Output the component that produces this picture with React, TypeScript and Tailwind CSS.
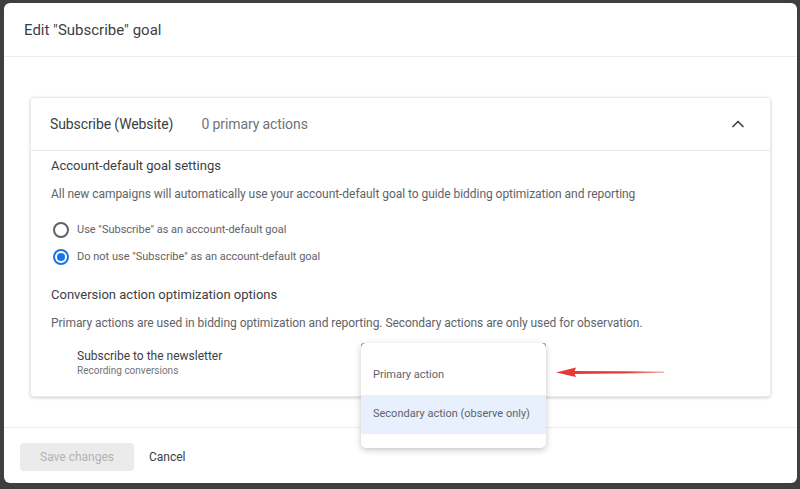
import { ChevronUp } from 'lucide-react';

function Radio({ checked }: { checked?: boolean }) {
  return checked ? (
    <span className="ml-[2px] flex h-[16px] w-[16px] shrink-0 items-center justify-center rounded-full border-2 border-[#1a73e8]">
      <span className="h-[8px] w-[8px] rounded-full bg-[#1a73e8]"></span>
    </span>
  ) : (
    <span className="ml-[2px] h-[16px] w-[16px] shrink-0 rounded-full border-2 border-[#5f6368]"></span>
  );
}

export default function App() {
  return (
    <div
      className="relative h-[489px] w-[800px] overflow-hidden bg-[#3f3f3f] pb-[6px] pl-[4px] pr-[3px] pt-[3px]"
      style={{ fontFamily: 'Roboto, "Noto Sans", Arial, sans-serif' }}
    >
      <div className="flex h-full flex-col rounded-[6px] bg-white">
        {/* header */}
        <div className="flex h-[54px] shrink-0 items-center border-b border-[#ececec] pl-[20px] pt-[2px] text-[15px] text-[#3c4043]">
          Edit "Subscribe" goal
        </div>

        {/* content */}
        <div className="flex-1 px-[26px] pt-[40px]">
          <div className="rounded-[4px] border border-[#ebebeb] shadow-[0_1px_3px_rgba(60,64,67,0.25)]">
            <div className="flex h-[53px] items-center border-b border-[#e8e8e8] pl-[19px] pr-[22px]">
              <span className="text-[14px] tracking-[-0.1px] text-[#3c4043]">Subscribe (Website)</span>
              <span className="ml-[28px] text-[14px] tracking-[-0.1px] text-[#6f7378]">0 primary actions</span>
              <ChevronUp className="ml-auto h-[20px] w-[20px] text-[#3c4043]" strokeWidth={2} />
            </div>
            <div className="pb-[19px] pl-[20px] pt-[5px]">
              <div className="text-[13px] leading-[20px] text-[#3c4043]">Account-default goal settings</div>
              <div className="mt-[8px] text-[12px] leading-[20px] tracking-[-0.05px] text-[#5f6368]">
                All new campaigns will automatically use your account-default goal to guide bidding optimization and reporting
              </div>
              <div className="mt-[14px] flex h-[24px] items-center gap-[8px] text-[11px] text-[#5f6368]">
                <Radio />
                <span>Use "Subscribe" as an account-default goal</span>
              </div>
              <div className="mt-[3px] flex h-[24px] items-center gap-[8px] text-[11px] text-[#5f6368]">
                <Radio checked />
                <span>Do not use "Subscribe" as an account-default goal</span>
              </div>
              <div className="mt-[16px] text-[13px] leading-[20px] text-[#3c4043]">Conversion action optimization options</div>
              <div className="mt-[8px] text-[12px] leading-[20px] tracking-[-0.05px] text-[#5f6368]">
                Primary actions are used in bidding optimization and reporting. Secondary actions are only used for observation.
              </div>
              <div className="mt-[15px] pl-[26px]">
                <div className="text-[12px] leading-[16px] text-[#3c4043]">Subscribe to the newsletter</div>
                <div className="mt-[1px] text-[10px] leading-[12px] text-[#70757a]">Recording conversions</div>
              </div>
            </div>
          </div>
        </div>

        {/* footer */}
        <div className="flex h-[56px] shrink-0 items-center border-t border-[#ececec] pl-[16px] pt-[3px]">
          <button className="h-[28px] w-[114px] rounded-[4px] bg-[#ebebeb] text-[12px] text-[#b3b3b3]">Save changes</button>
          <button className="ml-[15px] text-[12px] text-[#3c4043]">Cancel</button>
        </div>
      </div>

      {/* select outline peeking at the menu's top corners */}
      <div className="absolute left-[361px] top-[343px] h-[8px] w-[185px] rounded-t-[3px] border-x-2 border-t-2 border-[#5b7be0]"></div>

      {/* dropdown menu */}
      <div className="absolute left-[361px] top-[343px] flex h-[105px] w-[185px] flex-col rounded-[5px] bg-white pt-[13px] shadow-[0_2px_6px_rgba(60,64,67,0.3)]">
        <div className="flex h-[39px] items-center pl-[12px] text-[11px] text-[#5f6368]">Primary action</div>
        <div className="flex h-[39px] items-center bg-[#e8f0fe] pl-[12px] text-[11px] text-[#5f6368]">Secondary action (observe only)</div>
      </div>

      {/* red arrow */}
      <svg className="absolute left-[554px] top-[364px]" width="112" height="16" viewBox="0 0 112 16">
        <defs>
          <linearGradient id="fade" x1="0" y1="0" x2="1" y2="0">
            <stop offset="0" stopColor="#e53935" />
            <stop offset="0.6" stopColor="#e53935" />
            <stop offset="1" stopColor="#e53935" stopOpacity="0.35" />
          </linearGradient>
        </defs>
        <path d="M18 7 L110 7.6 L110 9 L18 10 Z" fill="url(#fade)" />
        <path d="M2 8.5 L22 3.5 L20 8.5 L22 13 Z" fill="#e53935" />
      </svg>
    </div>
  );
}
